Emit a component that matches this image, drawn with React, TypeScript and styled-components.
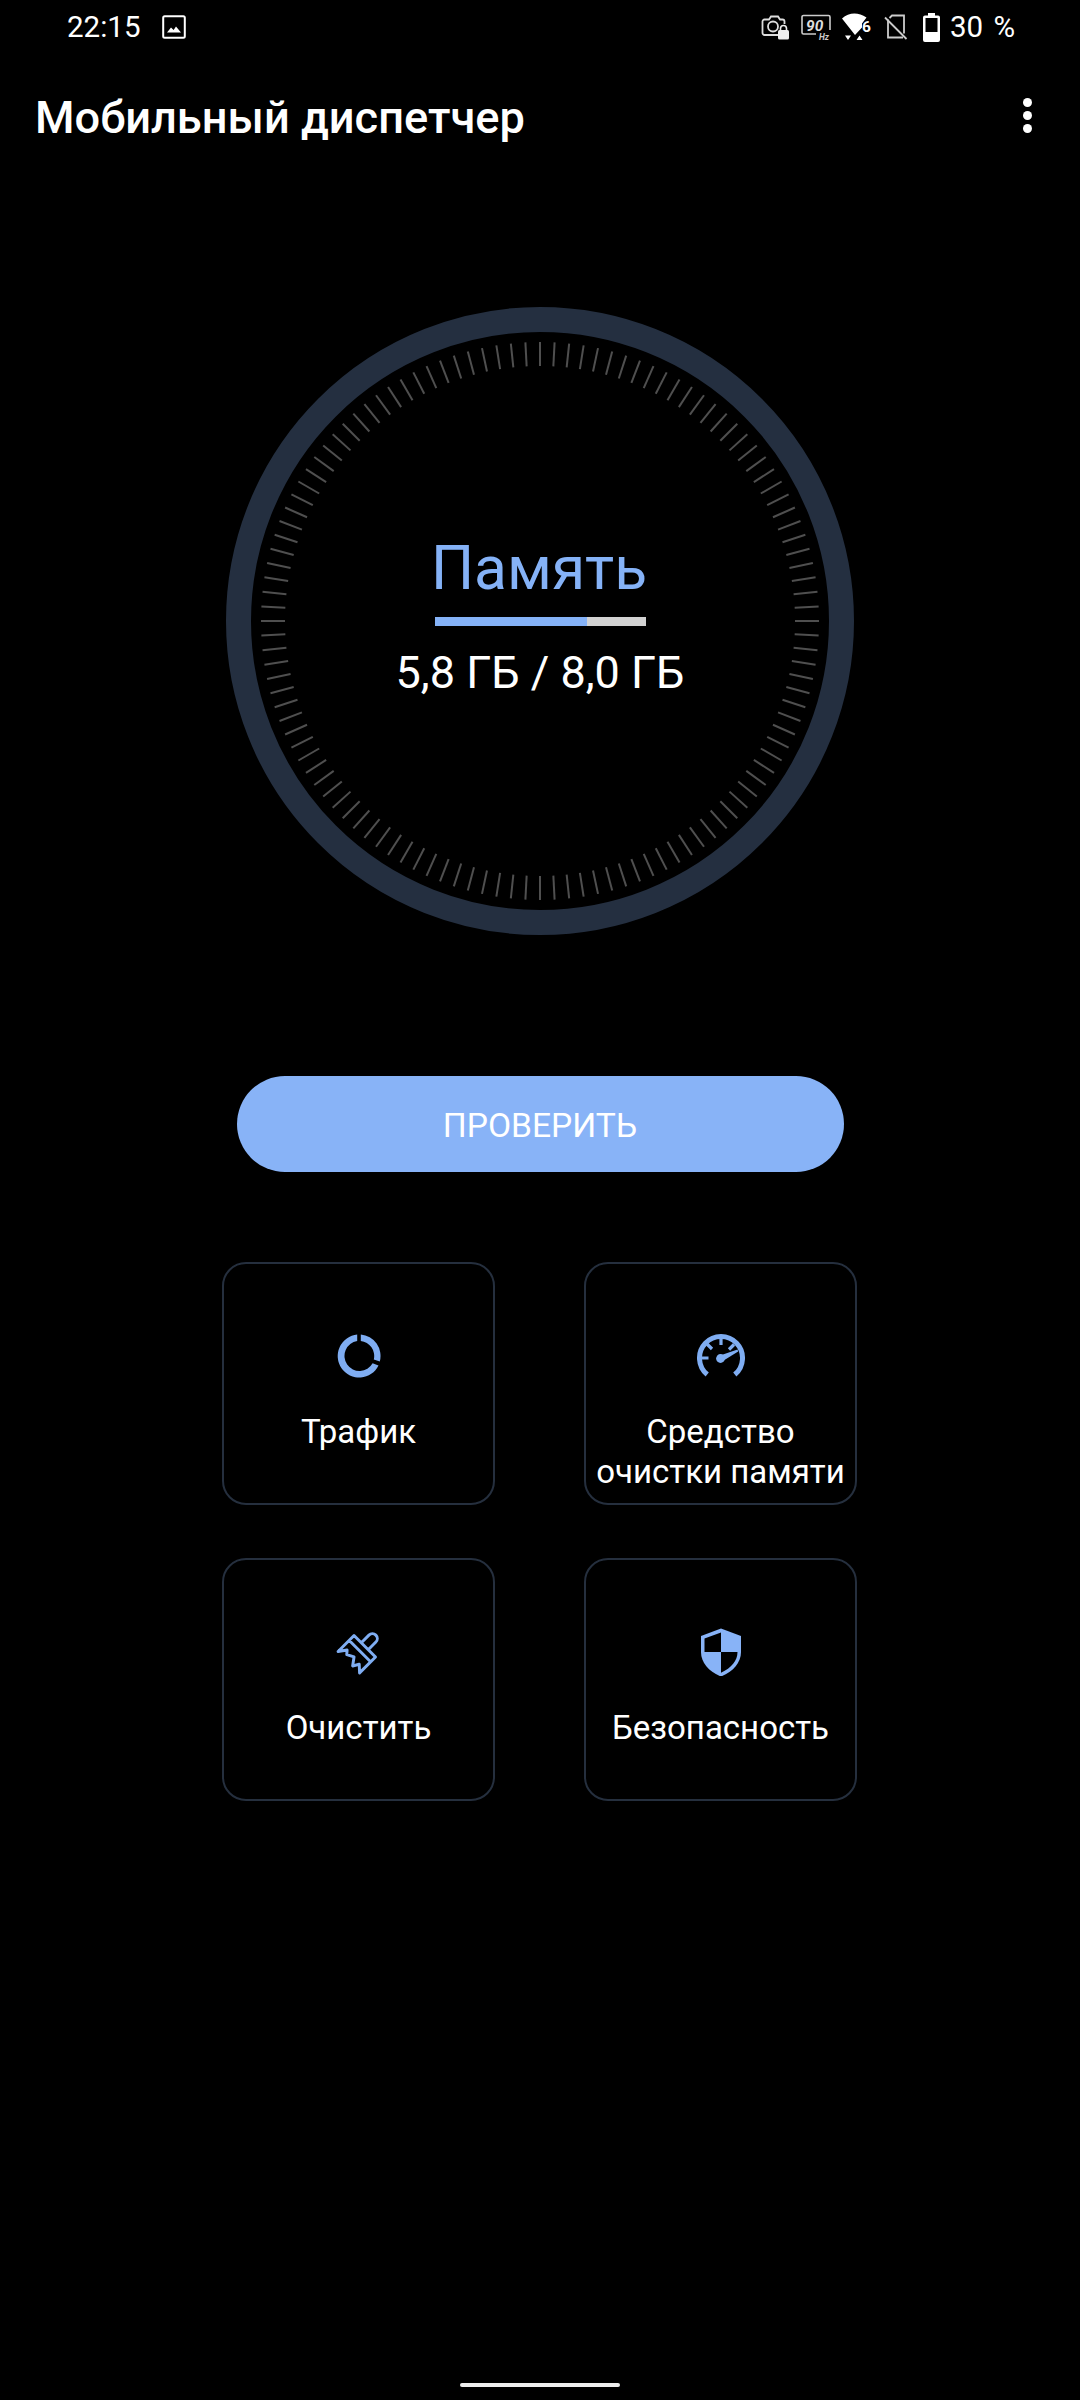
import React from "react";
import styled, { createGlobalStyle } from "styled-components";

const GlobalStyle = createGlobalStyle`
  html, body {
    margin: 0;
    padding: 0;
    background: #000;
  }
  body {
    font-family: Roboto, "Liberation Sans", sans-serif;
    color: #fff;
  }
`;

const Screen = styled.div`
  width: 1080px;
  height: 2400px;
  background: #000;
  display: flex;
  flex-direction: column;
  align-items: center;
  overflow: hidden;
`;

const StatusBar = styled.div`
  width: 100%;
  box-sizing: border-box;
  height: 52px;
  padding: 2px 65px 0 67px;
  display: flex;
  align-items: center;
  justify-content: space-between;
`;

const StatusGroup = styled.div`
  display: flex;
  align-items: center;
`;

const Clock = styled.span`
  font-size: 29.5px;
  margin-right: 22px;
`;

const BatteryText = styled.span`
  font-size: 29.5px;
  margin-left: 10px;
  word-spacing: 3px;
`;

const Header = styled.header`
  width: 100%;
  box-sizing: border-box;
  height: 64px;
  margin-top: 33px;
  padding: 0 0 0 35px;
  display: flex;
  align-items: center;
  justify-content: space-between;
`;

const Title = styled.h1`
  margin: 0;
  font-size: 45.2px;
  font-weight: 500;
`;

const MenuButton = styled.div`
  margin: 0 48px 4px 0;
  display: flex;
  flex-direction: column;
  gap: 4px;
`;

const MenuDot = styled.span`
  width: 9px;
  height: 9px;
  border-radius: 50%;
  background: #fff;
`;

const Gauge = styled.section`
  position: relative;
  width: 628px;
  height: 628px;
  margin-top: 158px;
  box-sizing: border-box;
  border: 25px solid #242f40;
  border-radius: 50%;
  display: flex;
  flex-direction: column;
  align-items: center;
  justify-content: center;
`;

const Ticks = styled.svg`
  position: absolute;
  left: -25px;
  top: -25px;
  width: 628px;
  height: 628px;
`;

const GaugeLabel = styled.div`
  font-size: 60.5px;
  line-height: 70px;
  color: #85b2f7;
  margin: -10px 2px 0 0;
`;

const Progress = styled.div`
  width: 211px;
  height: 9px;
  margin-top: 13px;
  background: #d2d2d2;
`;

const ProgressFill = styled.div`
  height: 100%;
  background: #85b2f7;
`;

const GaugeValue = styled.div`
  font-size: 45px;
  line-height: 50px;
  margin-top: 22px;
`;

const CheckButton = styled.button`
  width: 607px;
  height: 96px;
  margin-top: 141px;
  border: 0;
  border-radius: 48px;
  background: #88b3f7;
  color: #fff;
  font-family: inherit;
  font-size: 33.6px;
  padding: 2px 0 0;
`;

const Tiles = styled.div`
  margin: 90px 1px 0 0;
  display: grid;
  grid-template-columns: 273px 273px;
  grid-auto-rows: 243px;
  column-gap: 89px;
  row-gap: 53px;
`;

const Tile = styled.div`
  box-sizing: border-box;
  border: 2px solid #252f3e;
  border-radius: 24px;
  padding-top: 68px;
  display: flex;
  flex-direction: column;
  align-items: center;
`;

const TileIcon = styled.svg`
  width: 48px;
  height: 48px;
  flex: none;
  color: #7fadf2;
`;

const TileLabel = styled.div`
  margin-top: 32px;
  font-size: 33px;
  line-height: 40px;
  text-align: center;
  white-space: pre-line;
`;

const HomeBar = styled.div`
  width: 160px;
  height: 4px;
  margin-top: auto;
  margin-bottom: 13px;
  border-radius: 2px;
  background: #eee;
`;

const StatusIcon = styled.svg<{ $gap?: number }>`
  display: block;
  flex: none;
  margin-left: ${(p) => p.$gap ?? 0}px;
`;

const tickAngles = Array.from({ length: 120 }, (_, i) => i * 3);

const PhotoIcon = () => (
  <StatusIcon width="24" height="24" viewBox="0 0 24 24">
    <rect x="1.2" y="1.2" width="21.6" height="21.6" rx="1.5" fill="none" stroke="#fff" strokeWidth="2" />
    <path d="M5 17.5l4-5 2.6 2.6 2.4-3.6 5 6z" fill="#fff" />
  </StatusIcon>
);

const CameraLockIcon = () => (
  <StatusIcon $gap={1} width="28" height="26" viewBox="0 0 28 26">
    <path
      d="M17 21H3.5A2 2 0 0 1 1.5 19V7.5a2 2 0 0 1 2-2H8L10 2.5h7l2 3h2.5a2 2 0 0 1 2 2V10"
      fill="none"
      stroke="#ddd"
      strokeWidth="1.8"
    />
    <circle cx="12" cy="12.5" r="5" fill="none" stroke="#ddd" strokeWidth="1.8" />
    <rect x="17" y="16" width="11" height="9.5" rx="1.5" fill="#eee" />
    <path d="M19.5 16.5v-2a3 3 0 0 1 6 0v2" fill="none" stroke="#eee" strokeWidth="1.6" />
  </StatusIcon>
);

const RefreshRateIcon = () => (
  <StatusIcon $gap={12} width="30" height="26" viewBox="0 0 30 26">
    <path d="M15 20H2.5a1.5 1.5 0 0 1-1.5-1.5V3a1.5 1.5 0 0 1 1.5-1.5h25A1.5 1.5 0 0 1 29 3v13" fill="none" stroke="#ccc" strokeWidth="1.6" />
    <text x="5" y="16.5" fontFamily="Roboto, sans-serif" fontSize="15.5" fontStyle="italic" fontWeight="700" fill="#ddd">
      90
    </text>
    <text x="18" y="25.5" fontFamily="Roboto, sans-serif" fontSize="8.5" fontStyle="italic" fontWeight="700" fill="#ccc">
      Hz
    </text>
  </StatusIcon>
);

const WifiIcon = () => (
  <StatusIcon $gap={11} width="30" height="28" viewBox="0 0 30 28">
    <path d="M0 5.5C7-.7 16-1 24.5 4.5L20 10.5V14.5L13 22 0 5.5z" fill="#fff" />
    <path d="M3 22.5h6L6 27zM14.5 27h6l-3-4.5z" fill="#fff" />
    <text x="20" y="18.5" fontFamily="Roboto, sans-serif" fontSize="15.5" fontWeight="700" fill="#fff">
      6
    </text>
  </StatusIcon>
);

const NoSimIcon = () => (
  <StatusIcon $gap={12} width="24" height="26" viewBox="0 0 24 26">
    <path d="M4 5.5V23.5H19M20 19.5V1.5H8L5.5 4" fill="none" stroke="#ccc" strokeWidth="1.8" />
    <path d="M1 3.5L22.5 25" stroke="#ccc" strokeWidth="1.8" />
  </StatusIcon>
);

const BatteryIcon = () => (
  <StatusIcon $gap={15} width="17" height="29" viewBox="0 0 17 29">
    <path d="M5 0h7v2.5h3a2 2 0 0 1 2 2V27a2 2 0 0 1-2 2H2a2 2 0 0 1-2-2V4.5a2 2 0 0 1 2-2h3z" fill="#fff" />
    <rect x="2.5" y="5" width="12" height="14" fill="#000" />
  </StatusIcon>
);

const TrafficIcon = () => (
  <TileIcon viewBox="0 0 48 48">
    <path d="M22.2 2.6A21.5 21.5 0 1 0 43.5 33.5L37.6 31.2A15 15 0 1 1 22.2 9.1z" fill="currentColor" />
    <path d="M25.8 2.5A21.5 21.5 0 0 1 44.8 29.5L38.8 27.5A15 15 0 0 0 25.8 9.1z" fill="currentColor" />
  </TileIcon>
);

const SpeedIcon = () => (
  <TileIcon viewBox="0 0 48 48">
    <path d="M10.2 42.5A21.5 21.5 0 1 1 37.8 42.5" fill="none" stroke="currentColor" strokeWidth="5" />
    <path
      d="M24 5v8M3.5 26h8M9.5 11.5l5.5 5.5M37 12.5l-5 5"
      fill="none"
      stroke="currentColor"
      strokeWidth="3.2"
    />
    <circle cx="23.5" cy="26.5" r="4.4" fill="currentColor" />
    <path d="M23 23.5L40.5 17.5 41.2 19.5 25 29.5z" fill="currentColor" />
  </TileIcon>
);

const BroomIcon = () => (
  <TileIcon viewBox="0 0 48 48" overflow="visible">
    <g transform="translate(27 21) rotate(45) scale(0.98) translate(-24 -23)">
      <path
        d="M19 19V8a5 5 0 0 1 10 0V19M8.5 19H39.5V42L33 36 29.5 42 24 34.5 17 38 14 34.5 8.5 42zM9 26H39"
        fill="none"
        stroke="currentColor"
        strokeWidth="3"
        strokeLinejoin="round"
      />
    </g>
  </TileIcon>
);

const ShieldIcon = () => (
  <TileIcon viewBox="0 0 48 48">
    <path d="M24 0.5L44 8V24C44 35 35.5 44 24 48.5 12.5 44 4 35 4 24V8z" fill="#88b3f7" />
    <path d="M24 4.5V24H7.5V10.5zM24 24H40.5C40.5 32.5 34.5 40 24 44.7z" fill="#000" />
  </TileIcon>
);

const tiles = [
  { label: "Трафик", icon: <TrafficIcon /> },
  { label: "Средство\nочистки памяти", icon: <SpeedIcon /> },
  { label: "Очистить", icon: <BroomIcon /> },
  { label: "Безопасность", icon: <ShieldIcon /> },
];

const App = () => {
  const used = 5.8;
  const total = 8;

  return (
    <>
      <GlobalStyle />
      <Screen>
        <StatusBar>
          <StatusGroup>
            <Clock>22:15</Clock>
            <PhotoIcon />
          </StatusGroup>
          <StatusGroup>
            <CameraLockIcon />
            <RefreshRateIcon />
            <WifiIcon />
            <NoSimIcon />
            <BatteryIcon />
            <BatteryText>30 %</BatteryText>
          </StatusGroup>
        </StatusBar>
        <Header>
          <Title>Мобильный диспетчер</Title>
          <MenuButton>
            <MenuDot />
            <MenuDot />
            <MenuDot />
          </MenuButton>
        </Header>
        <Gauge>
          <Ticks viewBox="0 0 628 628">
            {tickAngles.map((angle) => (
              <line
                key={angle}
                x1="314"
                y1="35"
                x2="314"
                y2="59"
                stroke="#4f4f4f"
                strokeWidth="2"
                transform={`rotate(${angle} 314 314)`}
              />
            ))}
          </Ticks>
          <GaugeLabel>Память</GaugeLabel>
          <Progress>
            <ProgressFill style={{ width: `${(used / total) * 100}%` }} />
          </Progress>
          <GaugeValue>5,8 ГБ / 8,0 ГБ</GaugeValue>
        </Gauge>
        <CheckButton>ПРОВЕРИТЬ</CheckButton>
        <Tiles>
          {tiles.map((tile) => (
            <Tile key={tile.label}>
              {tile.icon}
              <TileLabel>{tile.label}</TileLabel>
            </Tile>
          ))}
        </Tiles>
        <HomeBar />
      </Screen>
    </>
  );
};

export default App;
